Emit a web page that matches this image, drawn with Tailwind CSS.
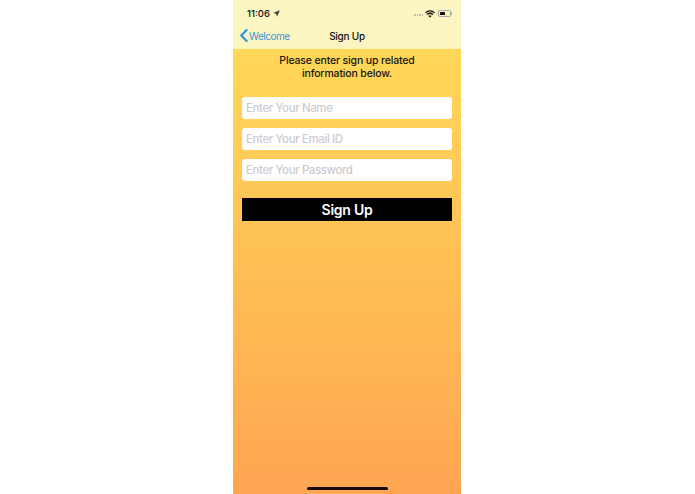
<!DOCTYPE html>
<html lang="en">
<head>
  <meta charset="UTF-8">
  <title>Sign Up</title>
  <script src="https://cdn.jsdelivr.net/npm/@tailwindcss/browser@4"></script>
</head>
<body class="bg-white font-['Inter','Liberation_Sans',sans-serif]">
  <div class="w-[228px] h-[494px] flex flex-col relative overflow-hidden ml-[233px]">
    <!-- status + nav -->
    <div class="h-[49px] bg-[#fbf5c2] shrink-0 flex flex-col">
      <div class="h-[27px] pl-[14px] pr-[9px] flex items-center justify-between">
        <div class="flex items-center gap-[3px] text-[9.5px] font-medium text-[#111] leading-none">
          <span>11:06</span>
          <svg width="7" height="7" viewBox="0 0 6 6"><path d="M5.8.2.3 2.6l2.5.6.6 2.5z" fill="#333"/></svg>
        </div>
        <div class="flex items-center gap-[2px]">
          <div class="flex gap-[1px] mt-[3px]">
            <span class="w-[1.5px] h-[1.5px] rounded-full bg-[#aaa]"></span>
            <span class="w-[1.5px] h-[1.5px] rounded-full bg-[#aaa]"></span>
            <span class="w-[1.5px] h-[1.5px] rounded-full bg-[#aaa]"></span>
            <span class="w-[1.5px] h-[1.5px] rounded-full bg-[#aaa]"></span>
          </div>
          <svg width="10" height="8" viewBox="0 0 10 8"><path d="M5 7.6 3.4 5.9a2.3 2.3 0 0 1 3.2 0zM2.6 5.1 1.5 4a5 5 0 0 1 7 0L7.4 5.1a3.4 3.4 0 0 0-4.8 0zM.8 3.3 0 2.4a7.1 7.1 0 0 1 10 0l-.8.9a6 6 0 0 0-8.4 0z" fill="#111"/></svg>
          <div class="flex items-center ml-[1px]">
            <div class="w-[13px] h-[7px] rounded-[2px] border border-[#aaa] p-[1px]">
              <div class="w-[5px] h-full bg-[#111] rounded-[0.5px]"></div>
            </div>
            <div class="w-[1px] h-[3px] bg-[#aaa]"></div>
          </div>
        </div>
      </div>
      <div class="h-[22px] relative flex items-center justify-center">
        <div class="absolute left-[7px] top-[2px] flex items-center gap-[1px] text-[#3d96d8] text-[10px] tracking-[-0.45px] leading-none">
          <svg width="8" height="13" viewBox="0 0 8 13"><path d="M6.6 1 1.3 6.5l5.3 5.5" fill="none" stroke="#2f8fd8" stroke-width="2.1" stroke-linecap="round" stroke-linejoin="round"/></svg>
          <span>Welcome</span>
        </div>
        <span class="text-[10px] font-medium text-[#111] tracking-[-0.25px] leading-none -mt-[5px]">Sign Up</span>
      </div>
    </div>
    <!-- form -->
    <div class="flex-1 flex flex-col bg-gradient-to-b from-[#ffd858] to-[#ffa552]">
      <p class="mt-[5px] text-center text-[#151515] text-[10.5px] font-medium tracking-[-0.15px] leading-[13px] px-[20px]">Please enter sign up related information below.</p>
      <div class="mt-[17px] px-[9px] flex flex-col gap-[9px]">
        <input class="h-[22px] rounded-[3px] bg-white px-[4px] text-[11.5px] font-medium tracking-[-0.4px] placeholder:text-[#cdcbd0] outline-none" placeholder="Enter Your Name">
        <input class="h-[22px] rounded-[3px] bg-white px-[4px] text-[11.5px] font-medium tracking-[-0.4px] placeholder:text-[#cdcbd0] outline-none" placeholder="Enter Your Email ID">
        <input class="h-[22px] rounded-[3px] bg-white px-[4px] text-[11.5px] font-medium tracking-[-0.4px] placeholder:text-[#cdcbd0] outline-none" placeholder="Enter Your Password">
      </div>
      <button class="mt-[17px] mx-[9px] h-[23px] bg-black text-white text-[14px] font-semibold tracking-[-0.25px]">Sign Up</button>
    </div>
    <div class="absolute bottom-[4px] left-[74px] w-[81px] h-[3px] rounded-full bg-[#1a0b00]"></div>
  </div>
</body>
</html>
